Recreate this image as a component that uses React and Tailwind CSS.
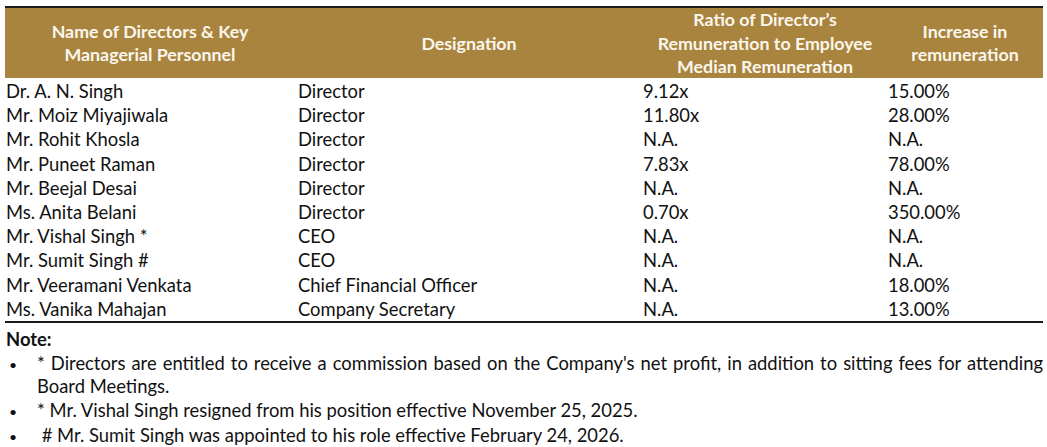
const rows = [
  ['Dr. A. N. Singh', 'Director', '9.12x', '15.00%'],
  ['Mr. Moiz Miyajiwala', 'Director', '11.80x', '28.00%'],
  ['Mr. Rohit Khosla', 'Director', 'N.A.', 'N.A.'],
  ['Mr. Puneet Raman', 'Director', '7.83x', '78.00%'],
  ['Mr. Beejal Desai', 'Director', 'N.A.', 'N.A.'],
  ['Ms. Anita Belani', 'Director', '0.70x', '350.00%'],
  ['Mr. Vishal Singh *', 'CEO', 'N.A.', 'N.A.'],
  ['Mr. Sumit Singh #', 'CEO', 'N.A.', 'N.A.'],
  ['Mr. Veeramani Venkata', 'Chief Financial Officer', 'N.A.', '18.00%'],
  ['Ms. Vanika Mahajan', 'Company Secretary', 'N.A.', '13.00%'],
]

const notes = [
  "* Directors are entitled to receive a commission based on the Company's net profit, in addition to sitting fees for attending Board Meetings.",
  '* Mr. Vishal Singh resigned from his position effective November 25, 2025.',
  '\u00a0# Mr. Sumit Singh was appointed to his role effective February 24, 2026.',
]

export default function App() {
  return (
    <div className="w-[1047px] h-[447px] bg-white overflow-hidden pt-[6px] pl-[5px] pr-[4px] font-['Lato','Liberation_Sans',sans-serif] text-[18.4px] text-[#111]">
      {/* Table */}
      <div className="border-t-2 border-b-2 border-[#1a1a1a]">
        <div className="grid grid-cols-[290px_348px_244px_1fr] h-[70px] bg-[#a8843f] text-[#fbf6ec] font-bold text-[17.8px] leading-[23.5px] text-center">
          <div className="flex items-center justify-center">Name of Directors &amp; Key<br />Managerial Personnel</div>
          <div className="flex items-center justify-center">Designation</div>
          <div className="flex items-center justify-center">Ratio of Director’s<br />Remuneration to Employee<br />Median Remuneration</div>
          <div className="flex items-center justify-center">Increase in<br />remuneration</div>
        </div>
        <div className="pt-[1px]">
          {rows.map((r) => (
            <div key={r[0]} className="grid grid-cols-[290px_348px_244px_1fr] h-[24.2px] leading-[24.2px]">
              <div className="pl-[1px]">{r[0]}</div>
              <div className="pl-[3px]">{r[1]}</div>
              <div className="pl-[0px]">{r[2]}</div>
              <div className="pl-[1px]">{r[3]}</div>
            </div>
          ))}
        </div>
      </div>
      {/* Notes */}
      <div className="pl-[1px] pt-[5px] leading-[23.8px]">
        <div className="font-bold">Note:</div>
        <ul>
          {notes.map((n) => (
            <li key={n} className="flex items-baseline">
              <span className="w-[31px] shrink-0 pl-[3px] text-[14px]">•</span>
              <span className="text-justify">{n}</span>
            </li>
          ))}
        </ul>
      </div>
    </div>
  )
}
